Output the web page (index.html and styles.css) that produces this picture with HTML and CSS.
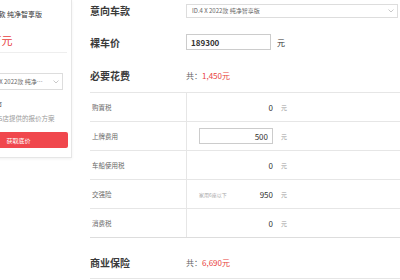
FILE: index.html
```html
<!DOCTYPE html>
<html lang="zh-CN">
<head>
    <meta charset="UTF-8">
    <meta name="viewport" content="width=device-width, initial-scale=1.0">
    <title>购车计算器</title>
    <link rel="stylesheet" href="styles.css">
</head>
<body>
    <div class="page">
        <aside class="side">
            <div class="side-title">ID.4 X 2022款 纯净智享版</div>
            <div class="side-price">18.93万元</div>
            <div class="side-select">
                <span>ID.4 X 2022款 纯净智享版</span>
                <svg width="6" height="4" viewBox="0 0 6 4"><path d="M0.5 0.5 L3 3 L5.5 0.5" fill="none" stroke="#bbb" stroke-width="0.8"/></svg>
            </div>
            <div class="side-label">所在城市</div>
            <div class="side-note">将由本地4S店提供的报价方案</div>
            <button class="side-btn">获取底价</button>
        </aside>

        <main class="calc">
            <div class="field f-model">
                <div class="field-label">意向车款</div>
                <div class="model-select">
                    <span>ID.4 X 2022款 纯净智享版</span>
                    <svg width="6" height="4" viewBox="0 0 6 4"><path d="M0.5 0.5 L3 3 L5.5 0.5" fill="none" stroke="#bbb" stroke-width="0.8"/></svg>
                </div>
            </div>

            <div class="field f-price">
                <div class="field-label">裸车价</div>
                <input class="price-input" type="text" value="189300">
                <span class="unit-lg">元</span>
            </div>

            <div class="field f-need">
                <div class="field-label">必要花费</div>
                <div class="total">共：<em>1,450元</em></div>
            </div>

            <div class="costs">
                <div class="cost-row">
                    <div class="cost-name">购置税</div>
                    <div class="cost-val">
                        <div class="cost-box"><span></span><span class="num">0</span></div>
                        <span class="cost-unit">元</span>
                    </div>
                </div>
                <div class="cost-row">
                    <div class="cost-name">上牌费用</div>
                    <div class="cost-val">
                        <input class="cost-input" type="text" value="500">
                        <span class="cost-unit">元</span>
                    </div>
                </div>
                <div class="cost-row">
                    <div class="cost-name">车船使用税</div>
                    <div class="cost-val">
                        <div class="cost-box"><span></span><span class="num">0</span></div>
                        <span class="cost-unit">元</span>
                    </div>
                </div>
                <div class="cost-row">
                    <div class="cost-name">交强险</div>
                    <div class="cost-val">
                        <div class="cost-box"><span class="cost-note">家用6座以下</span><span class="num">950</span></div>
                        <span class="cost-unit">元</span>
                    </div>
                </div>
                <div class="cost-row">
                    <div class="cost-name">消费税</div>
                    <div class="cost-val">
                        <div class="cost-box"><span></span><span class="num">0</span></div>
                        <span class="cost-unit">元</span>
                    </div>
                </div>
            </div>

            <div class="field f-biz">
                <div class="field-label">商业保险</div>
                <div class="total">共：<em>6,690元</em></div>
            </div>
        </main>
    </div>
</body>
</html>
```

FILE: styles.css
```css
* {
    box-sizing: border-box;
}
html, body {
    margin: 0;
    padding: 0;
    overflow: hidden;
    background-color: #fff;
    font-family: "Noto Sans CJK SC", "Noto Sans", sans-serif;
    color: #333;
}
.page {
    display: flex;
    align-items: flex-start;
    width: 448px;
    margin-left: -48px;
}

/* left card */
.side {
    width: 120px;
    flex-shrink: 0;
    padding: 10px 4px 9px 11px;
    background-color: #fff;
    border-right: 1px solid #e6e6e6;
    border-bottom: 1px solid #e6e6e6;
    box-shadow: 0 1px 3px rgba(0,0,0,0.06);
}
.side-title {
    font-size: 7px;
    line-height: 9px;
    color: #333;
    white-space: nowrap;
}
.side-price {
    margin-top: 14px;
    padding-bottom: 5px;
    border-bottom: 1px solid #eee;
    font-size: 11px;
    line-height: 14px;
    color: #e8413e;
}
.side-select {
    display: flex;
    align-items: center;
    justify-content: space-between;
    margin: 20px 4px 0 0;
    height: 17px;
    padding: 0 3px 0 23px;
    border: 1px solid #ddd;
    font-size: 6px;
    color: #666;
    white-space: nowrap;
    overflow: hidden;
}
.side-select span {
    overflow: hidden;
    text-overflow: ellipsis;
    width: 58px;
}
.side-label {
    margin-top: 10px;
    font-size: 6.5px;
    line-height: 8px;
    padding-left: 13px;
}
.side-note {
    margin-top: 6px;
    padding-left: 6px;
    font-size: 6.5px;
    line-height: 8px;
    color: #999;
    white-space: nowrap;
}
.side-btn {
    display: block;
    width: 105px;
    height: 16px;
    margin-top: 10px;
    padding: 0 0 0 6px;
    border: none;
    border-radius: 2px;
    background-color: #f0474d;
    color: #fff;
    font-family: inherit;
    font-size: 6px;
}

/* main calculator */
.calc {
    width: 310px;
    margin-left: 18px;
    flex-shrink: 0;
}
.field {
    display: flex;
    align-items: center;
}
.field-label {
    width: 96px;
    flex-shrink: 0;
    font-size: 10px;
    font-weight: bold;
    color: #3a3a3a;
}
.f-model {
    height: 21px;
}
.model-select {
    display: flex;
    align-items: center;
    justify-content: space-between;
    width: 212px;
    height: 14px;
    padding: 0 3px 0 5px;
    border: 1px solid #ddd;
    font-size: 6px;
    color: #666;
}
.f-price {
    height: 42px;
}
.price-input {
    width: 85px;
    height: 16px;
    padding: 0 4px;
    border: 1px solid #ccc;
    font-family: inherit;
    font-size: 8px;
    font-weight: bold;
    color: #333;
    outline: none;
}
.unit-lg {
    margin-left: 6px;
    font-size: 8px;
    color: #333;
}
.f-need {
    height: 24px;
}
.total {
    font-size: 8px;
    color: #666;
}
.total em {
    font-style: normal;
    color: #e8413e;
}
.costs {
    margin-top: 5px;
    border-top: 1px solid #e6e6e6;
}
.cost-row {
    display: flex;
    height: 29px;
    border-bottom: 1px solid #e6e6e6;
}
.cost-row:last-child {
    border-bottom-color: #ddd;
}
.cost-name {
    display: flex;
    align-items: center;
    width: 97px;
    padding-left: 2px;
    border-right: 1px solid #e6e6e6;
    font-size: 6.5px;
    color: #666;
}
.cost-val {
    display: flex;
    align-items: center;
    padding-left: 12px;
}
.cost-box {
    display: flex;
    align-items: center;
    justify-content: space-between;
    width: 74px;
}
.num {
    font-size: 8px;
    color: #333;
}
.cost-note {
    font-size: 5px;
    color: #aaa;
}
.cost-input {
    width: 74px;
    height: 16px;
    padding: 0 4px;
    border: 1px solid #ccc;
    text-align: right;
    font-family: inherit;
    font-size: 8px;
    color: #333;
    outline: none;
}
.cost-unit {
    margin-left: 8px;
    font-size: 6px;
    color: #999;
}
.f-biz {
    height: 41px;
    padding-top: 8px;
    border-bottom: 1px solid #e6e6e6;
}
```
